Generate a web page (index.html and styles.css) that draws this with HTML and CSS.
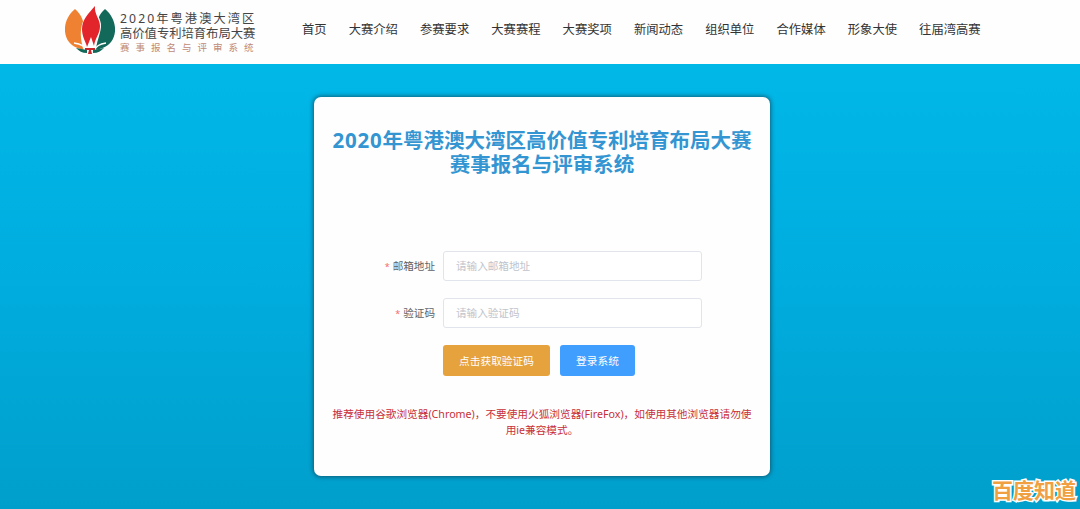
FILE: index.html
```html
<!DOCTYPE html>
<html lang="zh-CN">
<head>
	<meta charset="utf-8">
	<meta name="viewport" content="width=device-width, initial-scale=1.0">
	<title>2020年粤港澳大湾区高价值专利培育布局大赛</title>
	<link rel="stylesheet" href="styles.css">
</head>
<body>
	<header class="header">
		<a class="logo" href="#">
			<svg class="logo-icon" width="50" height="50" viewBox="0 0 50 50">
				<path fill="#ef8232" d="M10 4C-1 13-3 28 4 37c4 5 10 7 16 8 0-6-1-11-1-17C20 18 17 10 10 4z"/>
				<path fill="#12695a" d="M40 4c11 9 13 24 6 33-4 5-10 7-16 8 0-6 1-11 2-17C31 18 33 10 40 4z"/>
				<path fill="#fff" d="M19 46C13 28 15 12 31 0c-2 7 6 14 5 22-1 9-5 15-5 25z"/>
				<path fill="#e1252b" d="M30 1c-1 8 5 13 5 20 0 8-5 12-6 20l-3-9-4 10c-1-5-5-10-5-18 0-10 7-16 13-23z"/>
				<path fill="none" stroke="#fff" stroke-width="1.4" d="M9 38c7 1 11 3 14 8M41 38c-7 1-9 3-13 8"/>
				<path fill="#c9272c" d="M20 43h10v2h-4l1 4h-4l1-4h-4z"/>
				<path fill="#12695a" d="M11 43l11 2v3c-5 0-8-2-11-5zM39 43l-11 2v3c5 0 8-2 11-5z"/>
			</svg>
			<div class="logo-text">
				<div class="logo-year">2020年粤港澳大湾区</div>
				<div class="logo-name">高价值专利培育布局大赛</div>
				<div class="logo-sub">赛事报名与评审系统</div>
			</div>
		</a>
		<nav class="nav">
			<a href="#">首页</a>
			<a href="#">大赛介绍</a>
			<a href="#">参赛要求</a>
			<a href="#">大赛赛程</a>
			<a href="#">大赛奖项</a>
			<a href="#">新闻动态</a>
			<a href="#">组织单位</a>
			<a href="#">合作媒体</a>
			<a href="#">形象大使</a>
			<a href="#">往届湾高赛</a>
		</nav>
	</header>
	<main class="main">
		<div class="login">
			<h1 class="title"><span class="year">2020</span>年粤港澳大湾区高价值专利培育布局大赛<br>赛事报名与评审系统</h1>
			<form class="form">
				<div class="form-item">
					<label class="label" for="email">邮箱地址</label>
					<input class="input" id="email" type="text" placeholder="请输入邮箱地址">
				</div>
				<div class="form-item">
					<label class="label" for="code">验证码</label>
					<input class="input" id="code" type="text" placeholder="请输入验证码">
				</div>
				<div class="buttons">
					<button class="btn btn-code" type="button">点击获取验证码</button>
					<button class="btn btn-login" type="button">登录系统</button>
				</div>
			</form>
			<p class="tips">推荐使用谷歌浏览器(Chrome)，不要使用火狐浏览器(FireFox)，如使用其他浏览器请勿使<br>用ie兼容模式。</p>
		</div>
	</main>
	<div class="watermark">百度知道</div>
</body>
</html>
```

FILE: styles.css
```css
* {
	box-sizing: border-box;
}

body {
	margin: 0;
	height: 509px;
	display: flex;
	flex-direction: column;
	overflow: hidden;
	font-family: "Noto Sans", "Noto Sans CJK SC", sans-serif;
}

a {
	color: inherit;
	text-decoration: none;
}

.header {
	display: flex;
	height: 64px;
	flex: none;
	background: #fefefe;
}

.logo {
	display: flex;
	width: 302px;
	padding: 5px 0 0 65px;
	color: #444;
}

.logo-text {
	width: 136px;
	margin: 6px 0 0 5px;
	white-space: nowrap;
}

.logo-year {
	font-size: 12.2px;
	line-height: 15px;
	letter-spacing: 2.1px;
}

.logo-name {
	font-size: 12.3px;
	line-height: 15px;
}

.logo-sub {
	color: #c08a76;
	font-size: 9.5px;
	line-height: 13px;
	letter-spacing: 6px;
}

.nav {
	display: flex;
	gap: 22.1px;
	color: #333;
	font-size: 12.3px;
	line-height: 60px;
	white-space: nowrap;
}

.main {
	flex: 1;
	padding: 33px 0 0 314px;
	background: linear-gradient(#00b8e8, #00addf 48%, #009fcb);
}

.login {
	width: 456px;
	height: 379px;
	padding: 31px 10px 0;
	border-radius: 7px;
	background: #fefefe;
	box-shadow: 0 0 4px 1px rgba(20, 70, 90, .75);
}

.title {
	margin: 0;
	color: #3395d2;
	font-size: 20.5px;
	font-weight: bold;
	line-height: 24px;
	text-align: center;
	white-space: nowrap;
}

.year {
	letter-spacing: .8px;
}

.form {
	padding-top: 75px;
}

.form-item {
	display: flex;
	align-items: center;
	margin-bottom: 17px;
}

.label {
	width: 119px;
	padding: 0 8px 2px 0;
	color: #606266;
	font-size: 10.6px;
	text-align: right;
}

.label::before {
	content: "*";
	margin-right: 3px;
	color: #f56c6c;
	font-size: 9px;
}

.input {
	width: 259px;
	height: 30px;
	padding: 0 12px;
	border: 1px solid #e1e4ea;
	border-radius: 3px;
	background: #fff;
	font-family: inherit;
	font-size: 10.6px;
}

.input::placeholder {
	color: #c0c4cc;
}

.buttons {
	display: flex;
	gap: 10px;
	padding-left: 119px;
}

.btn {
	height: 31px;
	padding: 0 0 1px;
	border: none;
	border-radius: 3px;
	color: #fff;
	font-family: inherit;
	font-size: 10.7px;
}

.btn-code {
	width: 107px;
	background: #e6a23c;
}

.btn-login {
	width: 75px;
	background: #409eff;
}

.tips {
	margin: 30px 0 0;
	color: #c8303a;
	font-size: 10.67px;
	line-height: 16px;
	text-align: center;
	white-space: nowrap;
}

.watermark {
	position: absolute;
	right: 4px;
	bottom: 4px;
	color: #f0a040;
	font-size: 21px;
	font-weight: bold;
	line-height: 30px;
	-webkit-text-stroke: 3px #fff;
	paint-order: stroke fill;
}
```
